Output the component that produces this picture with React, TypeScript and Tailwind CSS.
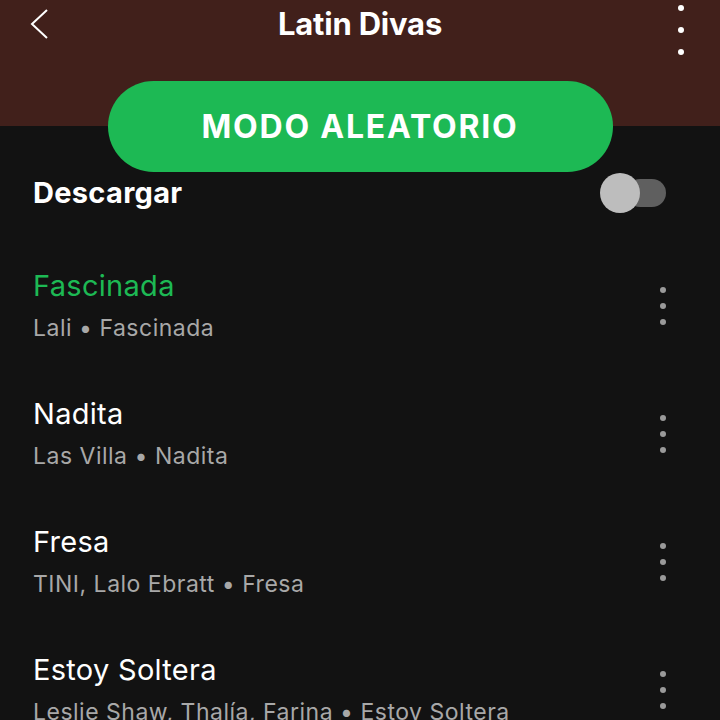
import React from 'react';

const tracks = [
  { title: 'Fascinada', sub: 'Lali • Fascinada', playing: true },
  { title: 'Nadita', sub: 'Las Villa • Nadita' },
  { title: 'Fresa', sub: 'TINI, Lalo Ebratt • Fresa' },
  { title: 'Estoy Soltera', sub: 'Leslie Shaw, Thalía, Farina • Estoy Soltera' },
];

function Dots({ color, gap }: { color: string; gap: string }) {
  return (
    <div className={`flex flex-col items-center ${gap}`}>
      <span className={`h-[6px] w-[6px] rounded-full ${color}`} />
      <span className={`h-[6px] w-[6px] rounded-full ${color}`} />
      <span className={`h-[6px] w-[6px] rounded-full ${color}`} />
    </div>
  );
}

export default function App() {
  return (
    <div
      className="h-[720px] w-[720px] overflow-hidden bg-[linear-gradient(to_bottom,#41201b_126px,#121212_126px)] text-white"
      style={{ fontFamily: 'Inter, "Noto Sans", sans-serif' }}
    >
      {/* top bar */}
      <div className="relative flex h-[48px] items-center justify-center">
        <svg className="absolute left-[28px] top-[8px]" width="24" height="32" viewBox="0 0 24 32" fill="none">
          <path d="M19 2 L4 16 L19 30" stroke="white" strokeWidth="2" />
        </svg>
        <h1 className="text-[31px] font-bold tracking-[-0.2px]">Latin Divas</h1>
        <div className="absolute right-[36px] top-[5px]">
          <Dots color="bg-white" gap="gap-[16px]" />
        </div>
      </div>

      {/* shuffle */}
      <div className="mt-[33px] flex justify-center">
        <button className="flex h-[91px] w-[505px] items-center justify-center rounded-full bg-[#1db954] text-[32px] font-bold tracking-[1.8px] text-white">
          MODO ALEATORIO
        </button>
      </div>

      {/* download */}
      <div className="flex h-[42px] items-center justify-between pl-[33px] pr-[54px]">
        <span className="text-[29px] font-bold tracking-[0.3px]">Descargar</span>
        <div className="relative h-[28px] w-[46px]">
          <div className="absolute right-0 top-0 h-[28px] w-[40px] rounded-full bg-[#5f5f5f]" />
          <div className="absolute left-[-20px] top-[-6px] h-[40px] w-[40px] rounded-full bg-[#bdbdbd]" />
        </div>
      </div>

      {/* tracks */}
      <div className="pt-[26px]">
        {tracks.map((t) => (
          <div key={t.title} className="flex h-[128px] items-center justify-between pl-[33px] pr-[54px] pt-[3px]">
            <div className="flex flex-col">
              <span
                className={`text-[29px] leading-[34px] tracking-[0.3px] ${t.playing ? 'text-[#1db954]' : 'text-white'}`}
              >
                {t.title}
              </span>
              <span className="mt-[11px] text-[23px] leading-[28px] tracking-[0.5px] text-[#a8a8a8]">{t.sub}</span>
            </div>
            <Dots color="bg-[#9a9a9a]" gap="gap-[10px]" />
          </div>
        ))}
      </div>
    </div>
  );
}
